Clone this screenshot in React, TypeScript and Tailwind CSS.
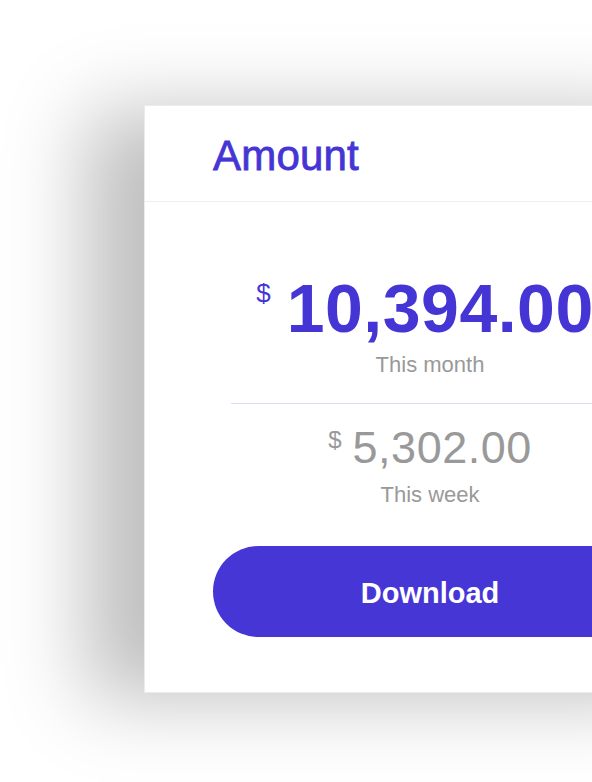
import React from "react";

export default function App() {
  return (
    <div
      className="w-[592px] h-[782px] overflow-hidden bg-white pl-[144px] pt-[105px]"
      style={{ fontFamily: '"Liberation Sans", Arial, sans-serif' }}
    >
      <div className="w-[572px] shrink-0 bg-white border border-[#ececec] shadow-[-58px_6px_76px_rgba(0,0,0,0.25)]">
        <div className="pl-[68px] pt-[29px] pb-[24px] border-b border-[#eeeeee]">
          <h1 className="text-[42px] leading-[42px] text-[#4535d5] tracking-[0.2px] [-webkit-text-stroke:0.8px_#4535d5]">
            Amount
          </h1>
        </div>
        <div className="flex flex-col items-center pt-[72px] pb-[55px]">
          <div className="flex items-start gap-[16px] pr-[10px]">
            <span className="text-[26px] leading-[26px] mt-[6px] text-[#4535d5]">$</span>
            <span className="text-[68px] leading-[68px] font-bold text-[#4535d5] tracking-[0.5px]">
              10,394.00
            </span>
          </div>
          <div className="mt-[12px] text-[22px] leading-[22px] text-[#999999]">This month</div>
          <div className="mt-[27px] w-[398px] h-px bg-[#dedbf4]" />
          <div className="mt-[21px] flex items-start gap-[11px]">
            <span className="text-[24px] leading-[24px] mt-[3px] text-[#999999]">$</span>
            <span className="text-[45px] leading-[45px] text-[#999999] tracking-[0.5px]">5,302.00</span>
          </div>
          <div className="mt-[14px] text-[22px] leading-[22px] text-[#999999]">This week</div>
          <button className="mt-[40px] w-[434px] h-[91px] rounded-full bg-[#4736d6] flex items-center justify-center pt-[5px] text-white text-[29px] font-bold">
            Download
          </button>
        </div>
      </div>
    </div>
  );
}
